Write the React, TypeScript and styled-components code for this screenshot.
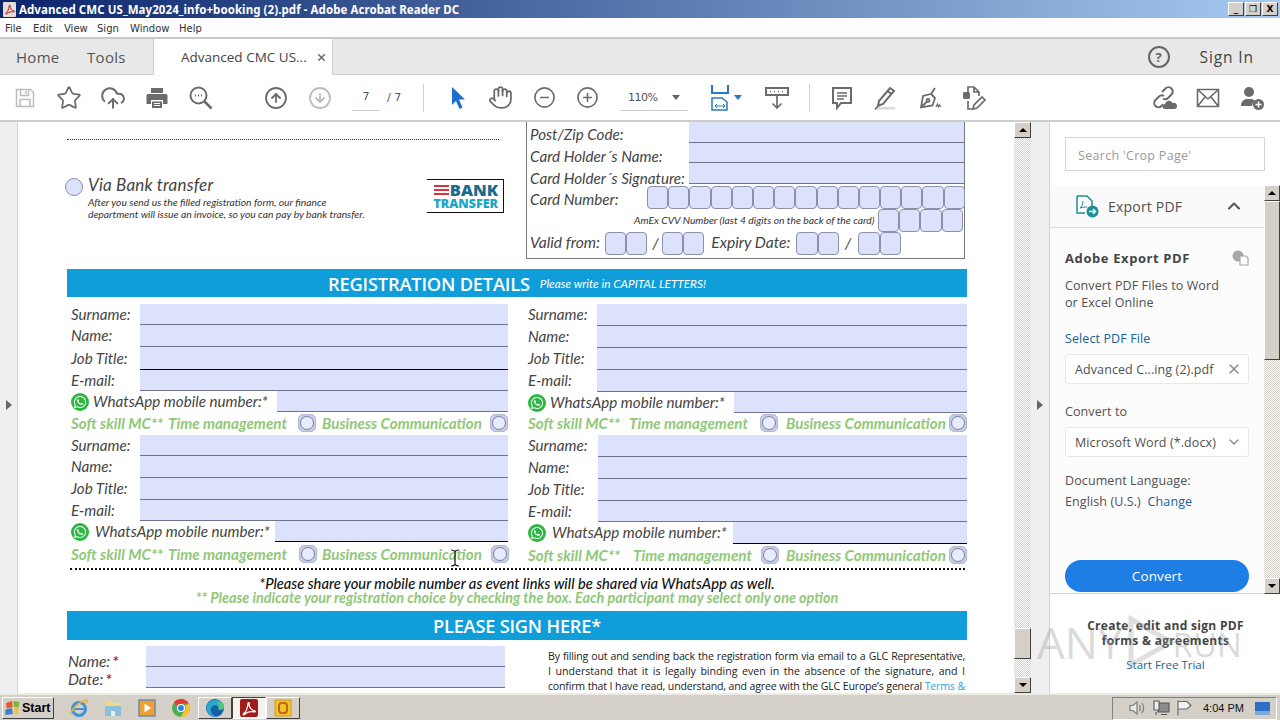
import styled, { createGlobalStyle } from "styled-components";
import {
  Star,
  CloudUpload,
  CircleArrowUp,
  CircleArrowDown,
  CircleMinus,
  CirclePlus,
  Hand,
  ChevronUp,
  ChevronDown,
  X,
} from "lucide-react";
import { FaWhatsapp } from "react-icons/fa";

const GlobalStyle = createGlobalStyle`
  html, body { margin: 0; padding: 0; }
  body { width: 1280px; height: 720px; overflow: hidden; background: #fff; font-family: "Open Sans", sans-serif; }
  * { box-sizing: border-box; }
`;

const PDF_FONT = `"Lato", "Noto Sans", sans-serif`;
const UI_FONT = `"Open Sans", "Noto Sans", sans-serif`;
const WIN_FONT = `"DejaVu Sans", "Liberation Sans", sans-serif`;

const Shell = styled.div`
  position: relative;
  width: 1280px;
  height: 720px;
  display: flex;
  flex-direction: column;
  overflow: hidden;
`;

/* ---------- window chrome ---------- */
const TitleBar = styled.div`
  height: 18px;
  flex: none;
  display: flex;
  align-items: center;
  padding: 0 2px 0 3px;
  background: linear-gradient(90deg, #0a246a 0%, #a6caf0 100%);
  color: #fff;
  font: bold 11.5px "Noto Sans", sans-serif;
  letter-spacing: 0.07px;
`;
const TitleIcon = styled.span`
  width: 13px;
  height: 15px;
  margin-right: 3px;
  display: flex;
  align-items: center;
  justify-content: center;
  background: #e4dfdf;
  border-radius: 1px;
`;
const TitleText = styled.span`
  flex: 1;
  white-space: nowrap;
`;
const WinButton = styled.span`
  width: 16px;
  height: 14px;
  margin-left: 1px;
  display: flex;
  align-items: center;
  justify-content: center;
  background: #d4d0c8;
  border: 1px solid;
  border-color: #fff #404040 #404040 #fff;
  color: #000;
  font: bold 9px ${WIN_FONT};
  line-height: 1;
`;
const MenuBar = styled.div`
  height: 21px;
  flex: none;
  display: flex;
  align-items: center;
  padding: 1px 0 0 5px;
  background: #fdfdfd;
  border-bottom: 2px solid #c9c9c9;
  color: #333;
  font: 10px ${WIN_FONT};
`;
const MenuItem = styled.span<{ $w: number }>`
  width: ${(p) => p.$w}px;
`;
const TabBar = styled.div`
  height: 36px;
  flex: none;
  display: flex;
  align-items: stretch;
  background: #e8e8e8;
  border-bottom: 1px solid #cfcfcf;
  font-family: ${UI_FONT};
  color: #555;
`;
const NavTab = styled.span<{ $w: number; $pl?: number }>`
  width: ${(p) => p.$w}px;
  padding-left: ${(p) => p.$pl ?? 0}px;
  display: flex;
  align-items: center;
  font-size: 15px;
  letter-spacing: 0.3px;
`;
const DocTab = styled.div`
  width: 180px;
  height: 36px;
  display: flex;
  align-items: center;
  padding: 0 0 0 27px;
  background: #fff;
  border-left: 1px solid #cfcfcf;
  border-right: 1px solid #cfcfcf;
  color: #444;
  font-size: 13.5px;
  white-space: nowrap;
`;
const TabClose = styled.span`
  margin-left: 9px;
  display: flex;
  color: #666;
`;
const TabRight = styled.div`
  margin-left: auto;
  display: flex;
  align-items: center;
  padding-right: 26px;
  font-size: 15.5px;
  letter-spacing: 0.9px;
  color: #444;
`;
const HelpCircle = styled.span`
  width: 22px;
  height: 22px;
  margin-right: 30px;
  border: 2px solid #666;
  border-radius: 50%;
  display: flex;
  align-items: center;
  justify-content: center;
  font: bold 13px ${UI_FONT};
  color: #666;
  letter-spacing: 0;
`;

const ToolBar = styled.div`
  height: 47px;
  flex: none;
  display: flex;
  align-items: center;
  padding-left: 3px;
  background: #fff;
  border-bottom: 2px solid #cccccc;
  color: #6b6b6b;
`;
const ToolButton = styled.span<{ $ml?: number; $w?: number; $faded?: boolean }>`
  width: ${(p) => p.$w ?? 44}px;
  margin-left: ${(p) => p.$ml ?? 0}px;
  flex: none;
  display: flex;
  align-items: center;
  justify-content: center;
  color: ${(p) => (p.$faded ? "#bdbdbd" : "inherit")};
`;
const ToolSep = styled.span<{ $ml: number }>`
  width: 1px;
  height: 28px;
  flex: none;
  margin-left: ${(p) => p.$ml}px;
  background: #d0d0d0;
`;
const PageBox = styled.div`
  width: 28px;
  height: 26px;
  margin-left: 10px;
  flex: none;
  text-align: center;
  font: 11px/24px ${WIN_FONT};
  color: #555;
  border-bottom: 1px solid #ccc;
`;
const PageTotal = styled.span`
  margin-left: 7px;
  width: 37px;
  flex: none;
  font: 11px ${WIN_FONT};
  color: #555;
`;
const ZoomBox = styled.div`
  width: 68px;
  height: 26px;
  margin-left: 11px;
  flex: none;
  display: flex;
  align-items: center;
  justify-content: space-between;
  padding: 0 8px 0 8px;
  font: 11px ${WIN_FONT};
  letter-spacing: -0.5px;
  color: #555;
  border-bottom: 1px solid #ccc;
`;
const Caret = styled.span<{ $c?: string; $ml?: number }>`
  width: 0;
  height: 0;
  flex: none;
  margin-left: ${(p) => p.$ml ?? 0}px;
  border-left: 4px solid transparent;
  border-right: 4px solid transparent;
  border-top: 5px solid ${(p) => p.$c ?? "#666"};
`;
const ToolRight = styled.div`
  margin-left: auto;
  padding-right: 6px;
  display: flex;
`;

/* ---------- work area ---------- */
const Main = styled.div`
  flex: 1;
  min-height: 0;
  display: flex;
`;
const Gutter = styled.div<{ $w: number }>`
  width: ${(p) => p.$w}px;
  flex: none;
  display: flex;
  align-items: center;
  justify-content: center;
  padding-bottom: 6px;
  background: #efefef;
  border-right: 1px solid #d4d4d4;
`;
const SideArrow = styled.span`
  width: 0;
  height: 0;
  border-top: 5px solid transparent;
  border-bottom: 5px solid transparent;
  border-left: 6px solid #666;
`;
const Page = styled.div`
  width: 996px;
  flex: none;
  overflow: hidden;
  padding-left: 49px;
  background: #fff;
  font-family: ${PDF_FONT};
  font-style: italic;
  color: #444;
`;
const PageInner = styled.div`
  width: 900px;
`;
const TopSection = styled.div`
  height: 147px;
  display: flex;
`;
const PayLeft = styled.div`
  width: 459px;
  flex: none;
  padding-top: 17px;
`;
const DottedRule = styled.div`
  width: 432px;
  border-top: 1px dotted #333;
`;
const BankRow = styled.div`
  margin-top: 38px;
  display: flex;
  align-items: flex-start;
`;
const BigRadio = styled.span`
  width: 18px;
  height: 18px;
  margin: 0 5px 0 -2px;
  flex: none;
  border: 1px solid #8d91a8;
  border-radius: 50%;
  background: #dde2fb;
`;
const BankCopy = styled.div`
  width: 339px;
  flex: none;
`;
const BankTitle = styled.div`
  margin: -2px 0 2px;
  font-size: 17px;
  line-height: 18px;
  letter-spacing: 0.2px;
`;
const BankNote = styled.div`
  font-size: 10.3px;
  line-height: 12px;
  color: #333;
  white-space: nowrap;
`;
const BankLogo = styled.div`
  width: 77px;
  height: 34px;
  margin-top: 1px;
  display: flex;
  flex-direction: column;
  align-items: flex-end;
  justify-content: center;
  padding-right: 5px;
  border: 1px solid #111;
  border-left-width: 0;
`;
const LogoBank = styled.span`
  height: 15px;
  display: flex;
  align-items: center;
  font: normal 800 16.5px/15px ${UI_FONT};
  color: #1b6c8c;
`;
const LogoStripes = styled.span`
  width: 15px;
  height: 10px;
  margin-right: 1px;
  background: repeating-linear-gradient(180deg, #d8343c 0 2px, #fff 2px 4px);
`;
const LogoTransfer = styled.span`
  height: 13px;
  font: normal 800 12.5px/13px ${UI_FONT};
  color: #1ba6c4;
`;
const CardBox = styled.div`
  width: 439px;
  height: 137px;
  flex: none;
  padding-left: 3px;
  border: 1px solid #777;
  border-top: 0;
`;
const CardLine = styled.div<{ $h: number; $mt?: number; $size?: number }>`
  height: ${(p) => p.$h}px;
  margin-top: ${(p) => p.$mt ?? 0}px;
  display: flex;
  align-items: center;
  font-size: ${(p) => p.$size ?? 15.2}px;
  white-space: nowrap;
`;
const CardLabel = styled.span<{ $w?: number; $dy?: number }>`
  width: ${(p) => p.$w ?? 159}px;
  padding-top: ${(p) => (p.$dy ?? 0) * 2}px;
  flex: none;
`;
const Field = styled.div<{ $dark?: boolean }>`
  flex: 1;
  align-self: stretch;
  min-width: 0;
  background: #dde2fc;
  border-bottom: 1px solid ${(p) => (p.$dark ? "#000" : "#6f7390")};
`;
const Cells = styled.span<{ $ml?: number }>`
  display: flex;
  flex: none;
  margin-left: ${(p) => p.$ml ?? 0}px;
`;
const Cell = styled.span`
  width: 21.2px;
  height: 23px;
  background: #dde2fc;
  border: 1px solid #8d91a8;
  border-radius: 4px;
`;
const Slash = styled.span<{ $ml: number }>`
  margin-left: ${(p) => p.$ml}px;
  flex: none;
`;
const CvvNote = styled.span`
  margin-left: 104px;
  width: 244px;
  flex: none;
  font-size: 10.3px;
  color: #333;
`;
const ValidText = styled.span<{ $ml?: number }>`
  margin-left: ${(p) => p.$ml ?? 0}px;
  padding-bottom: 2px;
  flex: none;
`;

const Band = styled.div<{ $h: number; $mt?: number }>`
  height: ${(p) => p.$h}px;
  margin-top: ${(p) => p.$mt ?? 0}px;
  display: flex;
  align-items: center;
  justify-content: center;
  background: #0f9ed9;
  color: #fff;
  font-style: normal;
`;
const BandTitle = styled.span<{ $size: number }>`
  font: 600 ${(p) => p.$size}px ${UI_FONT};
  letter-spacing: -0.2px;
`;
const BandNote = styled.span`
  margin-left: 10px;
  font: italic 11.8px ${PDF_FONT};
`;

const People = styled.div`
  margin-top: 7px;
  display: grid;
  grid-template-columns: 441px 439px;
  column-gap: 20px;
`;
const PersonRow = styled.div<{ $h: number; $label: number; $pad: number }>`
  height: ${(p) => p.$h}px;
  display: grid;
  grid-template-columns: ${(p) => p.$label}px 1fr;
  grid-template-rows: ${(p) => p.$h}px;
  align-items: center;
  padding-left: ${(p) => p.$pad}px;
  font-size: 15.2px;
`;
const PersonLabel = styled.span`
  padding-bottom: 2px;
`;
const WhatsLabel = styled.span<{ $gap: number }>`
  display: flex;
  align-items: center;
  gap: ${(p) => p.$gap}px;
  white-space: nowrap;
`;
const WhatsDot = styled.span`
  width: 18px;
  height: 18px;
  flex: none;
  display: flex;
  align-items: center;
  justify-content: center;
  border-radius: 50%;
  background: #2cb742;
  color: #fff;
`;
const SoftRow = styled.div<{ $h: number; $pad: number }>`
  height: ${(p) => p.$h}px;
  display: flex;
  align-items: center;
  padding: 0 0 2px ${(p) => p.$pad}px;
  color: #90c878;
  font-size: 15.2px;
  font-weight: 700;
  white-space: nowrap;
`;
const SoftLabel = styled.span<{ $end: number; $gap?: number; $ml?: number }>`
  width: ${(p) => p.$end}px;
  margin-left: ${(p) => p.$ml ?? 0}px;
  flex: none;
  display: flex;
  gap: ${(p) => p.$gap ?? 4}px;
`;
const SoftRadio = styled.span`
  width: 18px;
  height: 18px;
  flex: none;
  display: flex;
  align-items: center;
  justify-content: center;
  border-radius: 5px;
  background: #c6cbe8;
  border: 1px solid #b4b9d4;
  &::after {
    content: "";
    width: 12px;
    height: 12px;
    border-radius: 50%;
    border: 1.5px solid #7d82a2;
    background: #e8ebf9;
  }
`;
const DottedFoot = styled.div`
  width: 895px;
  margin: 1px 0 0 3px;
  border-top: 2px dotted #111;
`;
const Notice = styled.div<{ $green?: boolean; $size: number; $h: number; $mt?: number }>`
  height: ${(p) => p.$h}px;
  margin-top: ${(p) => p.$mt ?? 0}px;
  text-align: center;
  white-space: nowrap;
  line-height: ${(p) => p.$h}px;
  font-size: ${(p) => p.$size}px;
  font-weight: ${(p) => (p.$green ? 700 : 500)};
  color: ${(p) => (p.$green ? "#90c878" : "#111")};
`;
const SignSection = styled.div`
  margin-top: 6px;
  display: flex;
  padding-left: 1px;
`;
const SignLeft = styled.div`
  width: 437px;
  flex: none;
`;
const SignRow = styled.div<{ $h: number }>`
  height: ${(p) => p.$h}px;
  display: grid;
  grid-template-columns: 78px 1fr;
  grid-template-rows: ${(p) => p.$h}px;
  align-items: center;
  font-size: 15.5px;
`;
const SignLabel = styled.span<{ $dy: number }>`
  padding-top: ${(p) => p.$dy * 2}px;
`;
const Req = styled.b`
  color: #b3203a;
  margin-left: 2px;
`;
const SignCopy = styled.div`
  width: 417px;
  margin-left: 43px;
  flex: none;
  padding-top: 3px;
  font: normal 10.6px/15px ${UI_FONT};
  color: #222;
`;
const CopyLine = styled.div<{ $justify?: boolean; $ls?: number }>`
  white-space: nowrap;
  text-align: justify;
  text-align-last: ${(p) => (p.$justify ? "justify" : "left")};
  letter-spacing: ${(p) => p.$ls ?? 0}px;
`;
const CopyLink = styled.span`
  color: #2fa3dc;
`;

/* ---------- scrollbars ---------- */
const Scroll = styled.div<{ $w: number }>`
  width: ${(p) => p.$w}px;
  flex: none;
  display: flex;
  flex-direction: column;
  background: repeating-conic-gradient(#d4d0c8 0 25%, #ffffff 0 50%) 0 0 / 2px 2px;
`;
const ScrollBtn = styled.div`
  height: 16px;
  flex: none;
  display: flex;
  align-items: center;
  justify-content: center;
  background: #d4d0c8;
  border: 1px solid;
  border-color: #fff #404040 #404040 #fff;
`;
const ScrollArrow = styled.span<{ $down?: boolean }>`
  width: 0;
  height: 0;
  border-left: 4px solid transparent;
  border-right: 4px solid transparent;
  ${(p) => (p.$down ? "border-top: 4px solid #000;" : "border-bottom: 4px solid #000;")}
`;
const ScrollThumb = styled.div<{ $h: number; $top: number }>`
  height: ${(p) => p.$h}px;
  margin-top: ${(p) => p.$top}px;
  flex: none;
  background: #d4d0c8;
  border: 1px solid;
  border-color: #fff #404040 #404040 #fff;
`;
const ScrollFill = styled.div`
  flex: 1;
`;

/* ---------- right pane ---------- */
const Pane = styled.div`
  flex: 1;
  min-width: 0;
  display: flex;
  flex-direction: column;
  background: #fff;
  font-family: ${UI_FONT};
  font-size: 12.5px;
  color: #505050;
`;
const SearchBox = styled.div`
  height: 34px;
  width: 200px;
  flex: none;
  margin: 15px 0 14px 15px;
  padding: 2px 0 0 12px;
  display: flex;
  align-items: center;
  border: 1px solid #d5d5d5;
  color: #9a9a9a;
  letter-spacing: 0.3px;
`;
const PaneBody = styled.div`
  height: 409px;
  flex: none;
  display: flex;
`;
const PaneColumn = styled.div`
  width: 214px;
  flex: none;
  display: flex;
  flex-direction: column;
`;
const ExportHead = styled.div`
  height: 43px;
  flex: none;
  display: flex;
  align-items: center;
  padding: 0 20px 0 25px;
  background: #fafafa;
  border-bottom: 1px solid #dcdcdc;
  font-size: 14px;
  letter-spacing: 0.2px;
`;
const ExportName = styled.span`
  margin-left: 9px;
  flex: 1;
`;
const ExportBody = styled.div`
  flex: 1;
  padding: 21px 15px 0;
  background: #fcfcfc;
  border-bottom: 1px solid #d4d4d4;
  letter-spacing: 0.1px;
`;
const ExportTitle = styled.div`
  display: flex;
  align-items: center;
  justify-content: space-between;
  height: 18px;
  font-weight: 700;
  font-size: 13px;
  letter-spacing: 0.6px;
  color: #444;
`;
const BodyText = styled.div<{ $mt: number }>`
  margin-top: ${(p) => p.$mt}px;
  line-height: 17px;
  white-space: nowrap;
`;
const BlueText = styled.span`
  color: #17629a;
`;
const PickBox = styled.div<{ $mt: number }>`
  height: 30px;
  width: 184px;
  margin-top: ${(p) => p.$mt}px;
  display: flex;
  align-items: center;
  justify-content: space-between;
  padding: 0 6px 0 9px;
  background: #fff;
  border: 1px solid #e8e8e8;
  border-radius: 3px;
  white-space: nowrap;
`;
const ConvertButton = styled.div`
  height: 32px;
  width: 184px;
  margin-top: 50px;
  display: flex;
  align-items: center;
  justify-content: center;
  border-radius: 16px;
  background: #1f7de6;
  color: #fff;
  font-size: 13.5px;
`;
const Promo = styled.div`
  padding: 24px 18px 0 19px;
  text-align: center;
  font-size: 12px;
  line-height: 15px;
  letter-spacing: 0.3px;
`;
const PromoTitle = styled.div`
  font-weight: 700;
  color: #444;
`;
const PromoLink = styled.div`
  margin-top: 9px;
  color: #17629a;
  font-size: 11.5px;
  letter-spacing: 0;
`;

/* ---------- taskbar ---------- */
const Taskbar = styled.div`
  height: 27px;
  flex: none;
  display: flex;
  align-items: center;
  padding: 1px 3px 0 2px;
  background: #d4d0c8;
  border-top: 2px solid #eeeae4;
`;
const StartButton = styled.div`
  width: 52px;
  height: 22px;
  flex: none;
  display: flex;
  align-items: center;
  gap: 1px;
  padding-left: 1px;
  background: #d4d0c8;
  border: 1px solid;
  border-color: #fff #404040 #404040 #fff;
  color: #000;
  font: bold 12.5px "Liberation Sans", sans-serif;
`;
const QuickIcon = styled.span<{ $w?: number; $ml?: number; $state?: "raised" | "pressed" }>`
  width: ${(p) => p.$w ?? 34}px;
  height: 22px;
  margin-left: ${(p) => p.$ml ?? 0}px;
  flex: none;
  display: flex;
  align-items: center;
  justify-content: center;
  border: 1px solid;
  border-color: ${(p) =>
    p.$state === "raised"
      ? "#fff #404040 #404040 #fff"
      : p.$state === "pressed"
        ? "#404040 #fff #fff #404040"
        : "transparent"};
  background: ${(p) => (p.$state === "pressed" ? "#f4f3f0" : "transparent")};
`;
const Tray = styled.div`
  width: 165px;
  height: 23px;
  margin-left: auto;
  flex: none;
  display: flex;
  align-items: center;
  padding-left: 16px;
  border: 1px solid;
  border-color: #808080 #fff #fff #808080;
  color: #111;
  font: 11px "Liberation Sans", sans-serif;
`;
const TrayIcon = styled.span<{ $w: number }>`
  width: ${(p) => p.$w}px;
  flex: none;
  display: flex;
`;
const TrayTime = styled.span`
  width: 52px;
  flex: none;
  white-space: nowrap;
`;

/* ---------- overlays ---------- */
const Watermark = styled.div`
  position: absolute;
  left: 1037px;
  top: 608px;
  display: flex;
  align-items: center;
  gap: 2px;
  color: rgba(150, 150, 150, 0.36);
  font: 400 44px/62px ${UI_FONT};
  pointer-events: none;
`;
const WatermarkTail = styled.span`
  font-size: 33px;
  margin-left: -6px;
  margin-top: 6px;
`;
const IBeam = styled.svg`
  position: absolute;
  left: 450px;
  top: 549px;
`;

/* ---------- drawings ---------- */
const SaveIcon = () => (
  <svg width="22" height="22" viewBox="0 0 22 22" fill="none" stroke="currentColor" strokeWidth="1.5">
    <path d="M2.5 2.5h14l3 3v14h-17z" />
    <path d="M6.5 2.5v6h8v-6M12 4v3M6 19.5v-7h10v7" />
  </svg>
);
const PrinterIcon = () => (
  <svg width="24" height="24" viewBox="0 0 24 24" fill="currentColor">
    <path d="M6 2h12v5H6zM3 8h18a1.5 1.5 0 0 1 1.5 1.5V18H18v-4H6v4H1.500V9.500A1.500 1.500 0 0 1 3 8z" />
    <path d="M7 15.500h10V22H7z" />
    <path d="M9 17.500h6M9 19.500h6" stroke="#fff" strokeWidth="1" />
  </svg>
);
const FindIcon = () => (
  <svg width="26" height="26" viewBox="0 0 26 26" fill="none" stroke="currentColor" strokeWidth="2">
    <circle cx="10.500" cy="10.500" r="8" />
    <path d="M16.500 16.500l7 7" strokeWidth="2.500" />
    <path d="M7 10.500h1M10 10.500h1M13 10.500h1" />
  </svg>
);
const ArrowCursor = () => (
  <svg width="20" height="24" viewBox="0 0 20 24" fill="#1a6fd0">
    <path d="M4 1l13 12.500h-6l3.500 8-3 1.500-3.500-8-4 4z" />
  </svg>
);
const FitWidthIcon = () => (
  <svg width="20" height="26" viewBox="0 0 20 26" fill="none" stroke="#2a78c5" strokeWidth="2">
    <path d="M2 0v8h16V0" />
    <path d="M2 25V13h10l5 4v8z" strokeWidth="1.500" />
    <path d="M5 21h10M5 21l2-2M5 21l2 2M15 21l-2-2M15 21l-2 2" strokeWidth="1" />
  </svg>
);
const ReadIcon = () => (
  <svg width="24" height="24" viewBox="0 0 24 24" fill="none" stroke="currentColor" strokeWidth="2">
    <path d="M1 2h22v7H1z" />
    <path d="M5 5.500h1M9 5.500h1M13 5.500h1M17 5.500h1" strokeWidth="1.500" />
    <path d="M12 10v12M7.500 17.500L12 22l4.500-4.500" strokeWidth="1.700" />
  </svg>
);
const CommentIcon = () => (
  <svg width="22" height="24" viewBox="0 0 22 24" fill="none" stroke="currentColor" strokeWidth="2">
    <path d="M2 2h18v15H10l-4 5v-5H2z" />
    <path d="M6 7h10M6 10h10M6 13h7" strokeWidth="1.300" />
  </svg>
);
const HighlightIcon = () => (
  <svg width="24" height="24" viewBox="0 0 24 24" fill="none" stroke="currentColor" strokeWidth="2">
    <path d="M17 2l4 3L10 18l-5 2 1-5z" />
    <path d="M14.500 5l4 3" />
    <path d="M2 21h20v2.500H2z" fill="#d9d9d9" stroke="none" />
    <path d="M2 23.500l3-3.500" strokeWidth="1.500" />
  </svg>
);
const SignIcon = () => (
  <svg width="26" height="24" viewBox="0 0 26 24" fill="none" stroke="currentColor" strokeWidth="1.800">
    <path d="M14 8l4 4-2.500 7.500-11.500 2 2-11.500zM4 21.500l6-6M14 8l4-6M18 12l-4-4" />
    <circle cx="11" cy="14.500" r="1.500" />
    <path d="M19 21l1.500-3 1 3 1-2 1.500 2" strokeWidth="1.200" />
  </svg>
);
const DocEditIcon = () => (
  <svg width="26" height="26" viewBox="0 0 26 26" fill="none" stroke="currentColor" strokeWidth="1.700">
    <path d="M8 7V2h6l5 5v4M8 16v8h5M14 2v5h5" />
    <rect x="3" y="7" width="7" height="7" rx="1.500" fill="currentColor" stroke="none" />
    <path d="M22 12l3 3-8 8-4 1 1-4z" />
  </svg>
);
const LinkCloudIcon = () => (
  <svg width="26" height="26" viewBox="0 0 26 26" fill="none" stroke="currentColor" strokeWidth="2">
    <path d="M11 7l3.500-3.500a4 4 0 0 1 6 6L17 13a4 4 0 0 1-5 .5" />
    <path d="M13 11a4 4 0 0 0-5 .5l-3.500 3.500a4 4 0 0 0 6 6l1.500-1.500" />
    <path d="M14 24a2.500 2.500 0 0 1 0-5 4 4 0 0 1 7.500-1 3 3 0 0 1 2.500 6z" fill="currentColor" stroke="none" />
  </svg>
);
const MailIcon = () => (
  <svg width="24" height="20" viewBox="0 0 24 20" fill="none" stroke="currentColor" strokeWidth="1.600">
    <path d="M1.500 1.500h21v17h-21zM1.500 1.500L12 11 22.500 1.500M1.500 18.500L9 9M22.500 18.500L15 9" />
  </svg>
);
const UserAddIcon = () => (
  <svg width="26" height="26" viewBox="0 0 26 26" fill="currentColor">
    <circle cx="10" cy="7" r="5" />
    <path d="M2 21c0-5 3-6 5-7h6c1 .4 2 1 3 2-2 1.500-3 3.500-2.600 5z" />
    <circle cx="19.500" cy="19.500" r="5.500" />
    <path d="M19.500 16.500v6M16.500 19.500h6" stroke="#fff" strokeWidth="1.500" />
  </svg>
);
const PdfGlyph = ({ size, color }: { size: number; color: string }) => (
  <svg width={size} height={size} viewBox="0 0 16 16" fill="none" stroke={color} strokeWidth="1.300">
    <path d="M2.500 13.500c2-1 4-5 4.500-10 .2-1.500 1.500-1 1.200.5-.6 3 2.500 6.500 5.300 6.800 1.200.1 1 1.300-.3 1-3.500-.5-7.500.3-9.500 2.500-1 1-1.800.2-1.200-.8z" />
  </svg>
);
const ExportIcon = () => (
  <svg width="24" height="24" viewBox="0 0 24 24" fill="none" stroke="#1d8f97" strokeWidth="1.500">
    <path d="M2 2h10l5 5v6M2 2v17h8" />
    <path d="M5 14c2-1 3-4 3-7M5 14c3-1 5-1 7-1" strokeWidth="1" />
    <circle cx="17.500" cy="17.500" r="6" fill="#1d8f97" stroke="none" />
    <path d="M14 17.500h6.500M18 15l2.500 2.500L18 20" stroke="#fff" strokeWidth="1.500" />
  </svg>
);
const CloudDocIcon = () => (
  <svg width="17" height="16" viewBox="0 0 17 16" fill="none">
    <circle cx="6" cy="6" r="5.500" fill="#a8a8a8" />
    <path d="M8 6h6l2 2v7H8z" fill="#fff" stroke="#a8a8a8" strokeWidth="1.200" />
  </svg>
);
const StartFlag = () => (
  <svg width="17" height="16" viewBox="0 0 17 16">
    <path d="M2 3l6-2 .8 6-6 1.500z" fill="#e8582c" />
    <path d="M9.500 1l6 1-1 5.500-4.500-.5z" fill="#7cb342" />
    <path d="M1.500 9.500L8 8l.8 6-7.500 1z" fill="#3a7fd5" />
    <path d="M10 8l4.500.5-1 6-3-.5z" fill="#f5c02c" />
  </svg>
);
const IeIcon = () => (
  <svg width="20" height="20" viewBox="0 0 20 20" fill="none">
    <circle cx="10" cy="11" r="6.500" stroke="#3f94d8" strokeWidth="3" />
    <path d="M4 11h12" stroke="#3f94d8" strokeWidth="2" />
    <path d="M2 17C1 13 10 3 18 2c1.500 1-1 4-2 5" stroke="#e8b43c" strokeWidth="1.500" />
  </svg>
);
const FolderIcon = () => (
  <svg width="20" height="20" viewBox="0 0 20 20">
    <path d="M3 3h6l1 2h7v4H3z" fill="#ecd98a" />
    <path d="M2 8h16v10H2z" fill="#8bc0d8" />
    <path d="M8 18v-5h4v5z" fill="#e4eef3" />
  </svg>
);
const MediaIcon = () => (
  <svg width="20" height="20" viewBox="0 0 20 20">
    <rect x="2" y="2" width="16" height="16" fill="#f0a030" stroke="#6c8ba8" strokeWidth="1.500" />
    <path d="M7.500 5.500l6.500 4.500-6.500 4.500z" fill="#fff" />
  </svg>
);
const ChromeIcon = () => (
  <svg width="20" height="20" viewBox="0 0 20 20">
    <circle cx="10" cy="10" r="9" fill="#4caf50" />
    <path d="M10 1a9 9 0 0 1 7.800 4.500H10A4.500 4.500 0 0 0 5.800 8.400L3 4a9 9 0 0 1 7-3z" fill="#e53935" />
    <path d="M17.800 5.500A9 9 0 0 1 9.500 19l3.800-6A4.500 4.500 0 0 0 14 7.500z" fill="#fbc02d" />
    <circle cx="10" cy="10" r="3.500" fill="#2f80e0" stroke="#fff" strokeWidth="1.200" />
  </svg>
);
const EdgeIcon = () => (
  <svg width="20" height="20" viewBox="0 0 20 20">
    <circle cx="10" cy="10" r="9" fill="#155fa8" />
    <path d="M1.500 8C3 1 16-1 19 8c.5 3.500-3 4.500-5.500 3.500 1-3-1.500-5-4.500-4-3 .8-4 4-2.500 7 1 2 3 3.500 5.500 4C6 19.500 .5 14.500 1.500 8z" fill="#2aa7c9" />
    <path d="M12 3c3 0 6 2 7 5 .5 3-3 4.500-5.500 3.500C14 8 13 5 12 3z" fill="#4ccb7e" />
  </svg>
);
const AcrobatIcon = () => (
  <svg width="18" height="18" viewBox="0 0 18 18">
    <rect width="18" height="18" rx="2" fill="#a11b1b" />
    <g transform="translate(1 1)">
      <PdfGlyph size={16} color="#fff" />
    </g>
  </svg>
);
const OutlookBoxIcon = () => (
  <svg width="20" height="20" viewBox="0 0 20 20">
    <rect x="2" y="2" width="16" height="16" fill="#f2c230" stroke="#d89a20" />
    <rect x="6" y="5" width="8" height="10" rx="3" fill="none" stroke="#c06a10" strokeWidth="2" />
  </svg>
);
const SpeakerIcon = () => (
  <svg width="17" height="16" viewBox="0 0 17 16" fill="none" stroke="#7d7d7d" strokeWidth="1.200">
    <path d="M1 5.500h3L8 2v12l-4-3.500H1z" fill="#e8e8e8" />
    <path d="M10.500 5c1 2 1 4 0 6M13 3c2 3 2 7 0 10" />
  </svg>
);
const NetworkIcon = () => (
  <svg width="17" height="16" viewBox="0 0 17 16" fill="none" stroke="#555" strokeWidth="1.100">
    <path d="M5 3h11v9H5z" fill="#8d8d8d" />
    <path d="M1 1h5v9H1z" fill="#efefef" />
    <path d="M3 12v3M8 14.500h6" />
  </svg>
);
const FlagIcon = () => (
  <svg width="17" height="16" viewBox="0 0 17 16" fill="none" stroke="#666" strokeWidth="1.100">
    <path d="M2 0.500v15M2 1.500h9l4 4-4 3.500H2" fill="#f2f2f2" />
  </svg>
);
const DesktopIcon = () => (
  <svg width="15" height="13" viewBox="0 0 15 13">
    <rect width="15" height="13" fill="#2e6fc4" />
    <rect y="9" width="15" height="4" fill="#7fa9d8" />
  </svg>
);

const menuItems: [string, number][] = [
  ["File", 28],
  ["Edit", 31],
  ["View", 33],
  ["Sign", 33],
  ["Window", 49],
  ["Help", 30],
];

type Person = {
  rows: [string, number, boolean?][];
  label: number;
  pad: number;
  whats: { h: number; w: number; gap: number; dark?: boolean };
  soft: { h: number; a: number; ag: number; m: number; b: number };
};

const people: Person[] = [
  {
    rows: [["Surname:", 21], ["Name:", 22], ["Job Title:", 23, true], ["E-mail:", 21]],
    label: 69,
    pad: 4,
    whats: { h: 21, w: 206, gap: 4 },
    soft: { h: 23, a: 227, ag: 5, m: 6, b: 168 },
  },
  {
    rows: [["Surname:", 22], ["Name:", 22], ["Job Title:", 22], ["E-mail:", 22]],
    label: 69,
    pad: 0,
    whats: { h: 21, w: 206, gap: 4 },
    soft: { h: 22, a: 232, ag: 9, m: 8, b: 163 },
  },
  {
    rows: [["Surname:", 21], ["Name:", 22], ["Job Title:", 22], ["E-mail:", 21]],
    label: 69,
    pad: 4,
    whats: { h: 21, w: 204, gap: 6, dark: true },
    soft: { h: 25, a: 228, ag: 5, m: 5, b: 169 },
  },
  {
    rows: [["Surname:", 22], ["Name:", 22], ["Job Title:", 22], ["E-mail:", 21]],
    label: 70,
    pad: 0,
    whats: { h: 22, w: 205, gap: 6, dark: true },
    soft: { h: 23, a: 233, ag: 13, m: 7, b: 163 },
  },
];

const PersonBlock = ({ person }: { person: Person }) => (
  <div>
    {person.rows.map(([label, h, dark]) => (
      <PersonRow key={label} $h={h} $label={person.label} $pad={person.pad}>
        <PersonLabel>{label}</PersonLabel>
        <Field $dark={dark} />
      </PersonRow>
    ))}
    <PersonRow $h={person.whats.h} $label={person.whats.w} $pad={person.pad}>
      <WhatsLabel $gap={person.whats.gap}>
        <WhatsDot>
          <FaWhatsapp size={14} />
        </WhatsDot>
        <PersonLabel>WhatsApp mobile number:*</PersonLabel>
      </WhatsLabel>
      <Field $dark={person.whats.dark} />
    </PersonRow>
    <SoftRow $h={person.soft.h} $pad={person.pad}>
      <SoftLabel $end={person.soft.a} $gap={person.soft.ag}>
        <span>Soft skill MC**</span>
        <span>Time management</span>
      </SoftLabel>
      <SoftRadio />
      <SoftLabel $end={person.soft.b} $ml={person.soft.m}>
        Business Communication
      </SoftLabel>
      <SoftRadio />
    </SoftRow>
  </div>
);

const cellRange = (n: number) => Array.from({ length: n }, (_, i) => <Cell key={i} />);

const App = () => {
  return (
    <Shell>
      <GlobalStyle />
      <TitleBar>
        <TitleIcon>
          <PdfGlyph size={12} color="#c01818" />
        </TitleIcon>
        <TitleText>Advanced CMC US_May2024_info+booking (2).pdf - Adobe Acrobat Reader DC</TitleText>
        <WinButton>_</WinButton>
        <WinButton>❐</WinButton>
        <WinButton>X</WinButton>
      </TitleBar>
      <MenuBar>
        {menuItems.map(([name, w]) => (
          <MenuItem key={name} $w={w}>
            {name}
          </MenuItem>
        ))}
      </MenuBar>
      <TabBar>
        <NavTab $w={87} $pl={16}>
          Home
        </NavTab>
        <NavTab $w={66}>Tools</NavTab>
        <DocTab>
          Advanced CMC US...
          <TabClose>
            <X size={11} strokeWidth={3} />
          </TabClose>
        </DocTab>
        <TabRight>
          <HelpCircle>?</HelpCircle>
          Sign In
        </TabRight>
      </TabBar>
      <ToolBar>
        <ToolButton $faded>
          <SaveIcon />
        </ToolButton>
        <ToolButton>
          <Star size={26} strokeWidth={1.6} />
        </ToolButton>
        <ToolButton>
          <CloudUpload size={26} strokeWidth={1.8} />
        </ToolButton>
        <ToolButton>
          <PrinterIcon />
        </ToolButton>
        <ToolButton>
          <FindIcon />
        </ToolButton>
        <ToolButton $ml={31}>
          <CircleArrowUp size={24} strokeWidth={1.8} />
        </ToolButton>
        <ToolButton $faded>
          <CircleArrowDown size={24} strokeWidth={1.8} />
        </ToolButton>
        <PageBox>7</PageBox>
        <PageTotal>/ 7</PageTotal>
        <ToolSep $ml={-1} />
        <ToolButton $ml={12}>
          <ArrowCursor />
        </ToolButton>
        <ToolButton $ml={-2}>
          <Hand size={25} strokeWidth={1.7} />
        </ToolButton>
        <ToolButton>
          <CircleMinus size={23} strokeWidth={1.7} />
        </ToolButton>
        <ToolButton $ml={-1}>
          <CirclePlus size={23} strokeWidth={1.7} />
        </ToolButton>
        <ZoomBox>
          110%
          <Caret />
        </ZoomBox>
        <ToolButton $ml={16}>
          <FitWidthIcon />
          <Caret $c="#2a78c5" $ml={4} />
        </ToolButton>
        <ToolButton $ml={7}>
          <ReadIcon />
        </ToolButton>
        <ToolSep $ml={10} />
        <ToolButton $ml={10}>
          <CommentIcon />
        </ToolButton>
        <ToolButton $ml={-1}>
          <HighlightIcon />
        </ToolButton>
        <ToolButton $ml={1}>
          <SignIcon />
        </ToolButton>
        <ToolButton $ml={-1}>
          <DocEditIcon />
        </ToolButton>
        <ToolRight>
          <ToolButton>
            <LinkCloudIcon />
          </ToolButton>
          <ToolButton>
            <MailIcon />
          </ToolButton>
          <ToolButton>
            <UserAddIcon />
          </ToolButton>
        </ToolRight>
      </ToolBar>

      <Main>
        <Gutter $w={18}>
          <SideArrow />
        </Gutter>
        <Page>
          <PageInner>
            <TopSection>
              <PayLeft>
                <DottedRule />
                <BankRow>
                  <BigRadio />
                  <BankCopy>
                    <BankTitle>Via Bank transfer</BankTitle>
                    <BankNote>After you send us the filled registration form, our finance</BankNote>
                    <BankNote>department will issue an invoice, so you can pay by bank transfer.</BankNote>
                  </BankCopy>
                  <BankLogo>
                    <LogoBank>
                      <LogoStripes />
                      BANK
                    </LogoBank>
                    <LogoTransfer>TRANSFER</LogoTransfer>
                  </BankLogo>
                </BankRow>
              </PayLeft>
              <CardBox>
                <CardLine $h={21}>
                  <CardLabel $dy={1}>Post/Zip Code:</CardLabel>
                  <Field />
                </CardLine>
                <CardLine $h={20}>
                  <CardLabel $dy={3}>Card Holder´s Name:</CardLabel>
                  <Field />
                </CardLine>
                <CardLine $h={21}>
                  <CardLabel $dy={4}>Card Holder´s Signature:</CardLabel>
                  <Field />
                </CardLine>
                <CardLine $h={23} $mt={2}>
                  <CardLabel $w={117} $dy={1}>
                    Card Number:
                  </CardLabel>
                  <Cells>{cellRange(15)}</Cells>
                </CardLine>
                <CardLine $h={22}>
                  <CvvNote>AmEx CVV Number (last 4 digits on the back of the card)</CvvNote>
                  <Cells>{cellRange(4)}</Cells>
                </CardLine>
                <CardLine $h={24} $size={15.6}>
                  <ValidText>Valid from:</ValidText>
                  <Cells $ml={5}>{cellRange(2)}</Cells>
                  <Slash $ml={5}>/</Slash>
                  <Cells $ml={3}>{cellRange(2)}</Cells>
                  <ValidText $ml={7}>Expiry Date:</ValidText>
                  <Cells $ml={6}>{cellRange(2)}</Cells>
                  <Slash $ml={6}>/</Slash>
                  <Cells $ml={7}>{cellRange(2)}</Cells>
                </CardLine>
              </CardBox>
            </TopSection>

            <Band $h={28}>
              <BandTitle $size={18.3}>REGISTRATION DETAILS</BandTitle>
              <BandNote>Please write in CAPITAL LETTERS!</BandNote>
            </Band>
            <People>
              {people.map((person, i) => (
                <PersonBlock key={i} person={person} />
              ))}
            </People>
            <DottedFoot />
            <Notice $size={14.7} $h={15} $mt={6}>
              *Please share your mobile number as event links will be shared via WhatsApp as well.
            </Notice>
            <Notice $green $size={14.4} $h={14}>
              ** Please indicate your registration choice by checking the box. Each participant may select only one option
            </Notice>
            <Band $h={29} $mt={6}>
              <BandTitle $size={18.2}>PLEASE SIGN HERE*</BandTitle>
            </Band>
            <SignSection>
              <SignLeft>
                <SignRow $h={21}>
                  <SignLabel $dy={4}>
                    Name:<Req>*</Req>
                  </SignLabel>
                  <Field />
                </SignRow>
                <SignRow $h={21}>
                  <SignLabel $dy={1}>
                    Date:<Req>*</Req>
                  </SignLabel>
                  <Field />
                </SignRow>
              </SignLeft>
              <SignCopy>
                <CopyLine $justify $ls={-0.2}>
                  By filling out and sending back the registration form via email to a GLC Representative,
                </CopyLine>
                <CopyLine $justify>
                  I understand that it is legally binding even in the absence of the signature, and I
                </CopyLine>
                <CopyLine $justify $ls={-0.2}>
                  confirm that I have read, understand, and agree with the GLC Europe’s general{" "}
                  <CopyLink>Terms &amp;</CopyLink>
                </CopyLine>
              </SignCopy>
            </SignSection>
          </PageInner>
        </Page>
        <Scroll $w={17}>
          <ScrollBtn>
            <ScrollArrow />
          </ScrollBtn>
          <ScrollThumb $h={31} $top={490} />
          <ScrollFill />
          <ScrollBtn>
            <ScrollArrow $down />
          </ScrollBtn>
        </Scroll>
        <Gutter $w={19}>
          <SideArrow />
        </Gutter>
        <Pane>
          <SearchBox>Search 'Crop Page'</SearchBox>
          <PaneBody>
            <PaneColumn>
              <ExportHead>
                <ExportIcon />
                <ExportName>Export PDF</ExportName>
                <ChevronUp size={20} strokeWidth={2.5} color="#555" />
              </ExportHead>
              <ExportBody>
                <ExportTitle>
                  Adobe Export PDF
                  <CloudDocIcon />
                </ExportTitle>
                <BodyText $mt={10}>
                  Convert PDF Files to Word
                  <br />
                  or Excel Online
                </BodyText>
                <BodyText $mt={19}>
                  <BlueText>Select PDF File</BlueText>
                </BodyText>
                <PickBox $mt={7}>
                  Advanced C...ing (2).pdf
                  <X size={16} strokeWidth={2.2} color="#8a8a8a" />
                </PickBox>
                <BodyText $mt={19}>Convert to</BodyText>
                <PickBox $mt={7}>
                  Microsoft Word (*.docx)
                  <ChevronDown size={16} strokeWidth={2} color="#8a8a8a" />
                </PickBox>
                <BodyText $mt={15}>Document Language:</BodyText>
                <BodyText $mt={4}>
                  English (U.S.) &nbsp;<BlueText>Change</BlueText>
                </BodyText>
                <ConvertButton>Convert</ConvertButton>
              </ExportBody>
            </PaneColumn>
            <Scroll $w={16}>
              <ScrollBtn>
                <ScrollArrow />
              </ScrollBtn>
              <ScrollThumb $h={159} $top={0} />
              <ScrollFill />
              <ScrollBtn>
                <ScrollArrow $down />
              </ScrollBtn>
            </Scroll>
          </PaneBody>
          <Promo>
            <PromoTitle>
              Create, edit and sign PDF
              <br />
              forms &amp; agreements
            </PromoTitle>
            <PromoLink>Start Free Trial</PromoLink>
          </Promo>
        </Pane>
      </Main>

      <Taskbar>
        <StartButton>
          <StartFlag />
          Start
        </StartButton>
        <QuickIcon $ml={8}>
          <IeIcon />
        </QuickIcon>
        <QuickIcon>
          <FolderIcon />
        </QuickIcon>
        <QuickIcon>
          <MediaIcon />
        </QuickIcon>
        <QuickIcon>
          <ChromeIcon />
        </QuickIcon>
        <QuickIcon $state="raised">
          <EdgeIcon />
        </QuickIcon>
        <QuickIcon $state="pressed">
          <AcrobatIcon />
        </QuickIcon>
        <QuickIcon $state="raised">
          <OutlookBoxIcon />
        </QuickIcon>
        <Tray>
          <TrayIcon $w={24}>
            <SpeakerIcon />
          </TrayIcon>
          <TrayIcon $w={23}>
            <NetworkIcon />
          </TrayIcon>
          <TrayIcon $w={27}>
            <FlagIcon />
          </TrayIcon>
          <TrayTime>4:04 PM</TrayTime>
          <DesktopIcon />
        </Tray>
      </Taskbar>

      <Watermark>
        ANY
        <svg width="52" height="58" viewBox="0 0 52 58" fill="none" stroke="rgba(150,150,150,0.3)" strokeWidth="5">
          <path d="M6 6l40 23L6 52z" />
        </svg>
        <WatermarkTail>RUN</WatermarkTail>
      </Watermark>
      <IBeam width="10" height="18" viewBox="0 0 10 18" fill="none" stroke="#111" strokeWidth="1.200">
        <path d="M1 1c2 0 3 .5 4 1.500C6 1.500 7 1 9 1M5 2.500v13M1 17c2 0 3-.5 4-1.500 1 1 2 1.500 4 1.500" />
      </IBeam>
    </Shell>
  );
};

export default App;
